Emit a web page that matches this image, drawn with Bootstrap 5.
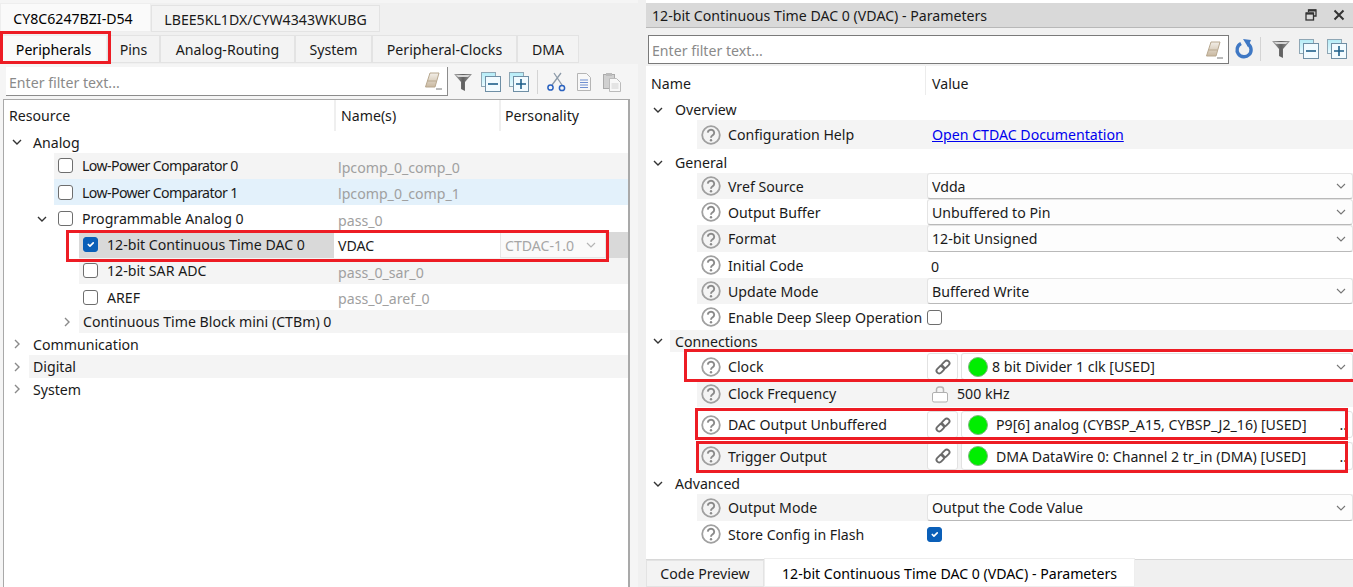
<!DOCTYPE html>
<html lang="en">
  <head>
    <meta charset="UTF-8" />
    <meta name="viewport" content="width=device-width, initial-scale=1.0" />
    <link href="https://cdn.jsdelivr.net/npm/bootstrap@5.3.2/dist/css/bootstrap.min.css" rel="stylesheet" />
    <title>12-bit Continuous Time DAC 0 (VDAC) - Parameters</title>
    <style>
      html, body { height: 587px; overflow: hidden; }
      body { background: #f0f0f0; font-family: "Noto Sans", "Open Sans", sans-serif; font-size: 14.15px; color: #1a1a1a; line-height: 1.2; position: relative; }
      .pane-l { width: 638px; height: 587px; padding-top: 3px; background: #f5f5f5; }
      .pane-r { width: 707px; height: 587px; margin-left: 8px; padding-top: 3px; background: #fff; }
      .pane-r > * { flex: none; }

      .tabs1, .tabs2, .tabs3 { border: 0; flex-wrap: nowrap; background: #f0f0f0; }
      .tabs1 .nav-link, .tabs2 .nav-link, .tabs3 .nav-link { color: #1a1a1a; border: 1px solid #e3e3e3; border-radius: 0; background: #f3f3f3; padding: 0; margin: 0; display: flex; align-items: center; justify-content: center; }
      .tabs1 { height: 30px; }
      .tabs1 .nav-link { height: 27px; margin-top: 2px; padding-top: 1px; }
      .tabs1 .nav-link.active, .tabs2 .nav-link.active, .tabs3 .nav-link.active { background: #fafafa; border-color: #eee; }
      .tabs1 .nav-link.active { height: 29px; margin-top: 0; padding: 2px 5px 0 0; }
      .tabs2 { height: 31px; }
      .tabs2 .nav-link { height: 28px; margin-top: 2px; padding-top: 1px; }
      .tw151 { width: 151px; } .tw229 { width: 229px; }
      .tw106 { width: 107px; } .tw53 { width: 53px; } .tw135 { width: 135px; } .tw77 { width: 77px; } .tw145 { width: 145px; } .tw61 { width: 62px; }
      .tw118 { width: 118px; } .tw371 { width: 371px; }

      .filter-l { height: 35px; padding: 3px 0 0 6px; }
      .filter-r { height: 38px; padding: 7px 0 0 2px; background: #f1f1f1; }
      .filter-box { height: 29px; background: #fff; border-bottom: 1px solid #8c8c8c; border-right: 1px solid #8c8c8c; }
      .filter-l .filter-box { width: 442px; flex: none; }
      .filter-r .filter-box { width: 581px; flex: none; border: 1px solid #7a7a7a; }
      .filter-box .form-control { border: 0; border-radius: 0; background: transparent; padding: 1px 0 0 3px; font-size: 14.15px; height: 27px; box-shadow: none; color: #1a1a1a; }
      .filter-l .form-control { padding-top: 3px; }
      .filter-box .form-control::placeholder { color: #8a8a8a; opacity: 1; }
      .tools-l { padding: 0 0 2px 5px; }
      .tools-r { padding: 0 0 4px 5px; }
      .ico { flex: none; display: block; }
      .tool-sep { width: 1px; height: 24px; background: #d4d4d4; flex: none; }
      .sep-shift { margin-left: -2px; margin-right: 2px; }

      .tree-box { width: 627px; height: 492px; margin-left: 3px; background: #fff; border: 1px solid #a9a9a9; border-bottom: 0; border-right-width: 2px; }
      .thead { height: 31px; }
      .thead > div { display: flex; align-items: center; }
      .c-res { width: 330px; padding-left: 5px; }
      .c-nm { width: 165px; padding-left: 5px; border-left: 2px solid #efefef; }
      .c-per { flex: 1; padding-left: 4px; border-left: 2px solid #efefef; }

      .trow { display: flex; }
      .sp1 { height: 1px; } .sp3 { height: 3px; } .sp4 { height: 4px; }
      .h21 { height: 21px; } .h22 { height: 22px; } .h23 { height: 23px; } .h26 { height: 26px; } .h27 { height: 27px; } .h28 { height: 28px; } .h29 { height: 29px; }
      .tw-i { flex: none; display: flex; align-items: center; justify-content: flex-end; padding-right: 6px; }
      .i0 { width: 25px; } .i1 { width: 50px; } .i2 { width: 75px; }
      .cell-a { flex: 1; display: flex; align-items: center; padding-left: 4px; min-width: 0; white-space: nowrap; }
      .lift { padding-bottom: 2px; }
      .tight { letter-spacing: -.6px; }
      .cell-b { width: 166px; flex: none; display: flex; align-items: center; padding-left: 4px; color: #a0a0a0; padding-top: 3px; }
      .cell-c { width: 128px; flex: none; display: flex; align-items: center; }
      .stripe { background: #f4f4f4; }
      .row-hover > div { background: #e3f1fb; }
      .row-sel .cell-a, .row-sel .cell-c { background: #d9d9d9; }
      .row-sel .cell-b { background: #fff; color: #1a1a1a; padding-top: 0; }
      .per-box { width: 106px; height: 100%; background: #fafafa; border: 1px solid #e6e6e6; color: #a6a6a6; display: flex; align-items: center; justify-content: space-between; padding: 0 8px 0 4px; }
      .form-check-input.chk { width: 15px; height: 15px; margin: 0 9px 0 0; flex: none; border: 1px solid #6e6e6e; border-radius: 3px; background-color: #fff; box-shadow: none; }
      .form-check-input.chk:checked { background-color: #0a5fb8; border-color: #0a5fb8; background-size: 11px; }

      .rtitle { height: 25px; background: #d9d9d9; border-bottom: 1px solid #b8b8b8; padding: 0 8px 0 6px; }
      .phead { height: 29px; }
      .phead > div { display: flex; align-items: center; padding-top: 6px; }
      .pc-name { width: 280px; padding-left: 5px; border-right: 1px solid #ececec; }
      .pc-val { padding-left: 6px; }
      .grow { display: flex; align-items: center; }
      .g-chev { width: 24px; flex: none; display: flex; justify-content: flex-end; padding-right: 6px; }
      .g-txt { flex: 1; padding-left: 5px; display: flex; align-items: center; height: 100%; }
      .prow { display: flex; padding-left: 51px; }
      .p-name { width: 229px; flex: none; display: flex; align-items: center; padding-left: 4px; white-space: nowrap; }
      .p-name .ico { margin-right: 7px; }
      .p-val { flex: 1; display: flex; align-items: center; min-width: 0; padding-left: 1px; }
      .p-txt { padding-left: 4px; padding-top: 3px; }
      .p-sel.form-select { height: 100%; border: 1px solid #e4e4e4; border-bottom-color: #b9b9b9; border-radius: 3px; padding: 0 20px 0 4px; font-size: 14.15px; color: #1a1a1a; background-color: #fdfdfd; background-image: url("data:image/svg+xml,%3csvg xmlns='http://www.w3.org/2000/svg' viewBox='0 0 12 12'%3e%3cpath d='M2 4l4 4 4-4' fill='none' stroke='%23777' stroke-width='1.1'/%3e%3c/svg%3e"); background-size: 12px 12px; background-position: right 5px center; box-shadow: none; font-family: inherit; line-height: normal; }
      .p-link { color: #0000ee; padding-left: 5px; }
      .lnk-btn { width: 31px; height: 100%; flex: none; border: 1px solid #e2e2e2; border-radius: 3px; background: #fff; padding: 0; display: flex; align-items: center; justify-content: center; }
      .con-box { flex: 1; min-width: 0; height: 100%; margin-left: 3px; border: 1px solid #e2e2e2; border-radius: 3px; background: #fff; display: flex; align-items: center; padding-left: 6px; white-space: nowrap; position: relative; }
      .con-sel { border-bottom-color: #b9b9b9; }
      .dot { width: 20px; height: 20px; flex: none; border-radius: 50%; background: #00ee00; border: 1px solid #7fb87f; margin-right: 4px; }
      .dot.wide { margin-right: 8px; }
      .con-end { margin-left: auto; margin-right: 5px; }
      .spacer-r { height: 12px; }
      .tabs3 { height: 28px; border-top: 1px solid #d8d8d8; }
      .tabs3 .nav-link { height: 100%; }
      .tabs3 .nav-link.active { background: #fff; margin-top: -2px; height: 29px; padding-top: 2px; }

      .redmk { position: absolute; border: 3px solid #ed1c24; pointer-events: none; }
      .mk-per { left: 0; top: 31px; width: 111px; height: 33px; }
      .mk-dac { left: 66px; top: 230px; width: 543px; height: 32px; }
      .mk-clk { left: 684px; top: 349px; width: 680px; height: 33px; }
      .mk-out { left: 695px; top: 408px; width: 653px; height: 32px; }
      .mk-trg { left: 696px; top: 441px; width: 652px; height: 32px; }
    </style>
  </head>

  <body>
    <svg width="0" height="0" class="position-absolute">
      <defs>
        <linearGradient id="gEr" x1="0" y1="0" x2="0" y2="1"><stop offset="0" stop-color="#f3efe8" /><stop offset="1" stop-color="#c9b8a0" /></linearGradient>
        <linearGradient id="gFn" x1="0" y1="0" x2="1" y2="0"><stop offset="0" stop-color="#a8a8a8" /><stop offset=".5" stop-color="#5f5f5f" /><stop offset="1" stop-color="#9a9a9a" /></linearGradient>
        <linearGradient id="gSq" x1="0" y1="0" x2="0" y2="1"><stop offset="0" stop-color="#b4ecf7" /><stop offset="1" stop-color="#eafaff" /></linearGradient>
        <symbol id="i-down" viewBox="0 0 12 12"><path d="M2 4l4 4 4-4" fill="none" stroke="#333" stroke-width="1.4" /></symbol>
        <symbol id="i-right" viewBox="0 0 12 12"><path d="M4 2l4 4-4 4" fill="none" stroke="#8a8a8a" stroke-width="1.4" /></symbol>
        <symbol id="i-sdown" viewBox="0 0 12 12"><path d="M2 4l4 4 4-4" fill="none" stroke="#777" stroke-width="1.1" /></symbol>
        <symbol id="i-sdown2" viewBox="0 0 12 12"><path d="M2 4l4 4 4-4" fill="none" stroke="#b5b5b5" stroke-width="1.2" /></symbol>
        <symbol id="i-eraser" viewBox="0 0 20 20"><path d="M7 2h9l-4 14H2.500z" fill="url(#gEr)" stroke="#b8a88f" /><path d="M4.500 10h9" stroke="#b8a88f" /><path d="M13 18h6" stroke="#777" /></symbol>
        <symbol id="i-filter" viewBox="0 0 20 20"><path d="M1 2h18l-7 8v9l-4-2v-7z" fill="url(#gFn)" /><path d="M3 3h14l-2 2H5z" fill="#d6d6d6" /></symbol>
        <symbol id="i-collapse" viewBox="0 0 20 20"><rect x=".5" y=".5" width="14" height="14" fill="url(#gSq)" stroke="#8fa7b5" /><rect x="4.500" y="4.500" width="15" height="15" fill="#f2fbff" stroke="#6f8fa5" /><path d="M7 12h10" stroke="#1d5f8a" stroke-width="1.600" /></symbol>
        <symbol id="i-expand" viewBox="0 0 20 20"><rect x=".5" y=".5" width="14" height="14" fill="url(#gSq)" stroke="#8fa7b5" /><rect x="4.500" y="4.500" width="15" height="15" fill="#f2fbff" stroke="#6f8fa5" /><path d="M7 12h10M12 7v10" stroke="#1d5f8a" stroke-width="1.600" /></symbol>
        <symbol id="i-cut" viewBox="0 0 20 20"><path d="M15 1L6 13M8 1l8 12" stroke="#8c9aa8" stroke-width="1.300" fill="none" /><circle cx="4.500" cy="15.500" r="2.600" fill="none" stroke="#2a62c0" stroke-width="1.500" /><circle cx="16" cy="16" r="2.600" fill="none" stroke="#2a62c0" stroke-width="1.500" /></symbol>
        <symbol id="i-copy" viewBox="0 0 20 20"><path d="M3.500 1.500h9l4 4v13h-13z" fill="#f8f8f8" stroke="#b5b5b5" /><path d="M6 8h8M6 10.500h8M6 13h8M6 15.500h8" stroke="#6f8fd0" /></symbol>
        <symbol id="i-paste" viewBox="0 0 20 20"><rect x="1.500" y="2.500" width="11" height="14" fill="#d0d0d0" stroke="#aaa" /><rect x="4" y="1" width="6" height="3" fill="#bbb" /><path d="M7.500 6.500h7l4 4v9h-11z" fill="#f8f8f8" stroke="#bbb" /><path d="M9.500 12h7M9.500 14h7M9.500 16h7" stroke="#d0d0d0" /></symbol>
        <symbol id="i-refresh" viewBox="0 0 20 20"><path d="M7 4.500a7 7 0 1 0 7 .5" fill="none" stroke="#3f78c4" stroke-width="3.400" /><path d="M9 0l8 1-3 7z" fill="#3f78c4" /></symbol>
        <symbol id="i-restore" viewBox="0 0 12 12"><path d="M3.500 3V1h7.500v6H8.500" fill="none" stroke="#333" stroke-width="1.300" /><path d="M3.500 1.500H11" stroke="#333" stroke-width="2" /><rect x="1" y="4" width="7.500" height="7" fill="none" stroke="#333" stroke-width="1.300" /><path d="M1 4.600h7.500" stroke="#333" stroke-width="2" /></symbol>
        <symbol id="i-close" viewBox="0 0 12 12"><path d="M1.500 1.500l9 9M10.500 1.500l-9 9" stroke="#333" stroke-width="2" /></symbol>
        <symbol id="i-help" viewBox="0 0 20 20"><circle cx="10" cy="10" r="8.800" fill="none" stroke="#a0a0a0" stroke-width="1.800" /><path d="M6.800 7.600a3.200 3 0 1 1 4.800 2.700c-1.100.7-1.600 1.100-1.600 2.500" fill="none" stroke="#8a8a8a" stroke-width="1.900" /><circle cx="10" cy="15.300" r="1.200" fill="#8a8a8a" /></symbol>
        <symbol id="i-link" viewBox="0 0 16 16"><g fill="none" stroke="#6b6b6b" stroke-width="1.900" transform="rotate(-45 8 8)"><rect x="0" y="5.300" width="8.600" height="5.400" rx="2.700" /><rect x="7.400" y="5.300" width="8.600" height="5.400" rx="2.700" /></g></symbol>
        <symbol id="i-lock" viewBox="0 0 18 18"><path d="M5.500 8V4.500a2.500 2.500 0 0 1 2.500-2.500h2a2.500 2.500 0 0 1 2.500 2.500V8" fill="none" stroke="#b5b5b5" stroke-width="1.500" /><rect x="1.500" y="7.500" width="15" height="9.500" rx="1.500" fill="#fff" stroke="#b0b0b0" /></symbol>
      </defs>
    </svg>

    <div class="d-flex">
      <!-- left pane -->
      <div class="pane-l flex-none">
        <ul class="nav nav-tabs tabs1">
          <li class="nav-item"><a class="nav-link active tw151" href="#">CY8C6247BZI-D54</a></li>
          <li class="nav-item"><a class="nav-link tw229" href="#">LBEE5KL1DX/CYW4343WKUBG</a></li>
        </ul>
        <ul class="nav nav-tabs tabs2">
          <li class="nav-item"><a class="nav-link active tw106" href="#">Peripherals</a></li>
          <li class="nav-item"><a class="nav-link tw53" href="#">Pins</a></li>
          <li class="nav-item"><a class="nav-link tw135" href="#">Analog-Routing</a></li>
          <li class="nav-item"><a class="nav-link tw77" href="#">System</a></li>
          <li class="nav-item"><a class="nav-link tw145" href="#">Peripheral-Clocks</a></li>
          <li class="nav-item"><a class="nav-link tw61" href="#">DMA</a></li>
        </ul>
        <div class="filter-l d-flex">
          <div class="filter-box d-flex align-items-center pe-1">
            <input class="form-control" type="text" placeholder="Enter filter text..." />
            <svg class="ico" width="20" height="20"><use href="#i-eraser" /></svg>
          </div>
          <div class="tools-l d-flex align-items-center gap-2">
            <svg class="ico" width="20" height="20"><use href="#i-filter" /></svg>
            <svg class="ico" width="20" height="20"><use href="#i-collapse" /></svg>
            <svg class="ico" width="20" height="20"><use href="#i-expand" /></svg>
            <div class="tool-sep"></div>
            <svg class="ico" width="20" height="20"><use href="#i-cut" /></svg>
            <svg class="ico" width="20" height="20"><use href="#i-copy" /></svg>
            <svg class="ico" width="20" height="20"><use href="#i-paste" /></svg>
          </div>
        </div>
        <div class="tree-box">
          <div class="thead d-flex">
            <div class="c-res">Resource</div>
            <div class="c-nm">Name(s)</div>
            <div class="c-per">Personality</div>
          </div>
          <div class="trow h22"><div class="tw-i i0"><svg class="ico" width="12" height="12"><use href="#i-down" /></svg></div><div class="cell-a">Analog</div></div>
          <div class="trow h26"><div class="tw-i i1"></div><div class="cell-a stripe lift"><input class="form-check-input chk" type="checkbox" /><span class="tight">Low-Power Comparator 0</span></div><div class="cell-b stripe">lpcomp_0_comp_0</div><div class="cell-c stripe"></div></div>
          <div class="trow h26 row-hover"><div class="tw-i i1 bg-white"></div><div class="cell-a"><input class="form-check-input chk" type="checkbox" /><span class="tight">Low-Power Comparator 1</span></div><div class="cell-b">lpcomp_0_comp_1</div><div class="cell-c"></div></div>
          <div class="trow h27"><div class="tw-i i1"><svg class="ico" width="12" height="12"><use href="#i-down" /></svg></div><div class="cell-a"><input class="form-check-input chk" type="checkbox" />Programmable Analog 0</div><div class="cell-b">pass_0</div><div class="cell-c"></div></div>
          <div class="trow h26 row-sel"><div class="tw-i i2"></div><div class="cell-a lift"><input class="form-check-input chk" type="checkbox" checked />12-bit Continuous Time DAC 0</div><div class="cell-b">VDAC</div><div class="cell-c"><div class="per-box">CTDAC-1.0<svg class="ico" width="12" height="12"><use href="#i-sdown2" /></svg></div></div></div>
          <div class="trow h26"><div class="tw-i i2"></div><div class="cell-a stripe lift"><input class="form-check-input chk" type="checkbox" />12-bit SAR ADC</div><div class="cell-b stripe">pass_0_sar_0</div><div class="cell-c stripe"></div></div>
          <div class="trow h26"><div class="tw-i i2"></div><div class="cell-a"><input class="form-check-input chk" type="checkbox" />AREF</div><div class="cell-b">pass_0_aref_0</div><div class="cell-c"></div></div>
          <div class="trow h23"><div class="tw-i i2"><svg class="ico" width="12" height="12"><use href="#i-right" /></svg></div><div class="cell-a stripe">Continuous Time Block mini (CTBm) 0</div><div class="cell-b stripe"></div><div class="cell-c stripe"></div></div>
          <div class="trow h22"><div class="tw-i i0"><svg class="ico" width="12" height="12"><use href="#i-right" /></svg></div><div class="cell-a">Communication</div></div>
          <div class="trow h23"><div class="tw-i i0"><svg class="ico" width="12" height="12"><use href="#i-right" /></svg></div><div class="cell-a stripe">Digital</div></div>
          <div class="trow h22"><div class="tw-i i0"><svg class="ico" width="12" height="12"><use href="#i-right" /></svg></div><div class="cell-a">System</div></div>
        </div>
      </div>

      <!-- right pane -->
      <div class="pane-r flex-none d-flex flex-column">
        <div class="rtitle d-flex align-items-center justify-content-between">
          <span>12-bit Continuous Time DAC 0 (VDAC) - Parameters</span>
          <span class="d-flex align-items-center gap-3">
            <svg class="ico" width="12" height="12"><use href="#i-restore" /></svg>
            <svg class="ico" width="12" height="12"><use href="#i-close" /></svg>
          </span>
        </div>
        <div class="filter-r d-flex">
          <div class="filter-box d-flex align-items-center pe-1">
            <input class="form-control" type="text" placeholder="Enter filter text..." />
            <svg class="ico" width="20" height="20"><use href="#i-eraser" /></svg>
          </div>
          <div class="tools-r d-flex align-items-center gap-2">
            <svg class="ico" width="20" height="20"><use href="#i-refresh" /></svg>
            <div class="tool-sep sep-shift"></div>
            <svg class="ico" width="20" height="20"><use href="#i-filter" /></svg>
            <svg class="ico" width="20" height="20"><use href="#i-collapse" /></svg>
            <svg class="ico" width="20" height="20"><use href="#i-expand" /></svg>
          </div>
        </div>
        <div class="phead d-flex"><div class="pc-name">Name</div><div class="pc-val">Value</div></div>
        <div class="sp4"></div>

        <div class="grow h21"><div class="g-chev"><svg class="ico" width="12" height="12"><use href="#i-down" /></svg></div><div class="g-txt">Overview</div></div>
        <div class="prow h29"><div class="p-name stripe"><svg class="ico" width="20" height="20"><use href="#i-help" /></svg>Configuration Help</div><div class="p-val stripe"><a class="p-link" href="#">Open CTDAC Documentation</a></div></div>
        <div class="sp3"></div>
        <div class="grow h21"><div class="g-chev"><svg class="ico" width="12" height="12"><use href="#i-down" /></svg></div><div class="g-txt">General</div></div>
        <div class="prow h26"><div class="p-name stripe"><svg class="ico" width="20" height="20"><use href="#i-help" /></svg>Vref Source</div><div class="p-val stripe"><select class="form-select p-sel"><option>Vdda</option></select></div></div>
        <div class="prow h26"><div class="p-name"><svg class="ico" width="20" height="20"><use href="#i-help" /></svg>Output Buffer</div><div class="p-val"><select class="form-select p-sel"><option>Unbuffered to Pin</option></select></div></div>
        <div class="prow h27"><div class="p-name stripe"><svg class="ico" width="20" height="20"><use href="#i-help" /></svg>Format</div><div class="p-val stripe"><select class="form-select p-sel"><option>12-bit Unsigned</option></select></div></div>
        <div class="prow h26"><div class="p-name"><svg class="ico" width="20" height="20"><use href="#i-help" /></svg>Initial Code</div><div class="p-val"><span class="p-txt">0</span></div></div>
        <div class="prow h26"><div class="p-name stripe"><svg class="ico" width="20" height="20"><use href="#i-help" /></svg>Update Mode</div><div class="p-val stripe"><select class="form-select p-sel"><option>Buffered Write</option></select></div></div>
        <div class="prow h26"><div class="p-name"><svg class="ico" width="20" height="20"><use href="#i-help" /></svg>Enable Deep Sleep Operation</div><div class="p-val"><input class="form-check-input chk" type="checkbox" /></div></div>
        <div class="grow h22"><div class="g-chev"><svg class="ico" width="12" height="12"><use href="#i-down" /></svg></div><div class="g-txt stripe">Connections</div></div>
        <div class="sp1"></div>
        <div class="prow h27"><div class="p-name"><svg class="ico" width="20" height="20"><use href="#i-help" /></svg>Clock</div><div class="p-val"><button class="lnk-btn" type="button"><svg class="ico" width="16" height="16"><use href="#i-link" /></svg></button><div class="con-box con-sel"><span class="dot"></span>8 bit Divider 1 clk [USED]<svg class="ico con-end" width="12" height="12"><use href="#i-sdown" /></svg></div></div></div>
        <div class="prow h27"><div class="p-name stripe"><svg class="ico" width="20" height="20"><use href="#i-help" /></svg>Clock Frequency</div><div class="p-val stripe"><svg class="ico ms-1 me-2" width="18" height="18"><use href="#i-lock" /></svg>500 kHz</div></div>
        <div class="sp4"></div>
        <div class="prow h27"><div class="p-name"><svg class="ico" width="20" height="20"><use href="#i-help" /></svg>DAC Output Unbuffered</div><div class="p-val"><button class="lnk-btn" type="button"><svg class="ico" width="16" height="16"><use href="#i-link" /></svg></button><div class="con-box"><span class="dot wide"></span>P9[6] analog (CYBSP_A15, CYBSP_J2_16) [USED]<span class="con-end">..</span></div></div></div>
        <div class="sp4"></div>
        <div class="prow h28"><div class="p-name stripe"><svg class="ico" width="20" height="20"><use href="#i-help" /></svg>Trigger Output</div><div class="p-val stripe"><button class="lnk-btn" type="button"><svg class="ico" width="16" height="16"><use href="#i-link" /></svg></button><div class="con-box"><span class="dot wide"></span>DMA DataWire 0: Channel 2 tr_in (DMA) [USED]<span class="con-end">..</span></div></div></div>
        <div class="sp3"></div>
        <div class="grow h21"><div class="g-chev"><svg class="ico" width="12" height="12"><use href="#i-down" /></svg></div><div class="g-txt">Advanced</div></div>
        <div class="prow h27"><div class="p-name stripe"><svg class="ico" width="20" height="20"><use href="#i-help" /></svg>Output Mode</div><div class="p-val stripe"><select class="form-select p-sel"><option>Output the Code Value</option></select></div></div>
        <div class="prow h26"><div class="p-name"><svg class="ico" width="20" height="20"><use href="#i-help" /></svg>Store Config in Flash</div><div class="p-val"><input class="form-check-input chk" type="checkbox" checked /></div></div>
        <div class="spacer-r"></div>
        <ul class="nav nav-tabs tabs3">
          <li class="nav-item"><a class="nav-link tw118" href="#">Code Preview</a></li>
          <li class="nav-item"><a class="nav-link active tw371" href="#">12-bit Continuous Time DAC 0 (VDAC) - Parameters</a></li>
        </ul>
      </div>
    </div>

    <!-- red annotation boxes -->
    <div class="redmk mk-per"></div>
    <div class="redmk mk-dac"></div>
    <div class="redmk mk-clk"></div>
    <div class="redmk mk-out"></div>
    <div class="redmk mk-trg"></div>
  </body>
</html>
